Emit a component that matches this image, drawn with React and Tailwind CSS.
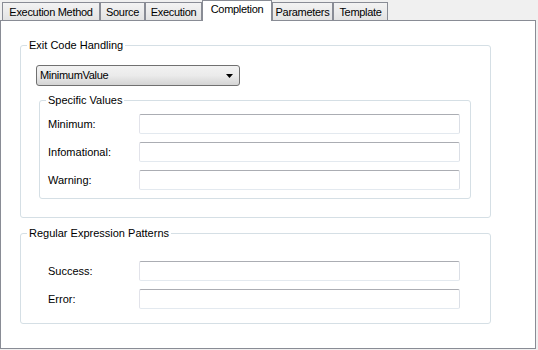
import React from 'react';

const tabs = [
  { name: 'Execution Method', w: 'w-[98px]' },
  { name: 'Source', w: 'w-[45px]' },
  { name: 'Execution', w: 'w-[57px]' },
  { name: 'Completion', w: 'w-[70px]', active: true },
  { name: 'Parameters', w: 'w-[61px]' },
  { name: 'Template', w: 'w-[55px]' },
];

const TextBox = () => (
  <div className="w-[321px] h-[20px] bg-white rounded-[2px] border border-t-[#abadb3] border-l-[#e2e3ea] border-r-[#dbdfe6] border-b-[#e3e9ef]" />
);

const Field = ({ label, labelClass }) => (
  <div className="flex items-center h-[20px]">
    <span className={labelClass}>{label}</span>
    <TextBox />
  </div>
);

const Group = ({ title, className, children }) => (
  <div className={`border border-[#d5dfe5] rounded-[3px] ${className}`}>
    <div className="-mt-[7px] ml-[6px] px-[2px] w-fit bg-white leading-[13px]">{title}</div>
    {children}
  </div>
);

const App = () => {
  return (
    <div
      className="w-[538px] h-[350px] bg-[#f0f0f0] text-[11px] text-black overflow-hidden"
      style={{ fontFamily: '"Liberation Sans", Arial, sans-serif' }}
    >
      <div className="flex items-end h-[21px] pl-[2px] relative z-10 tracking-[-0.3px]">
        {tabs.map((t) =>
          t.active ? (
            <div
              key={t.name}
              className={`${t.w} h-[21px] bg-white border border-b-0 border-[#898c95] flex justify-center pt-[2px] leading-[13px] whitespace-nowrap`}
            >
              {t.name}
            </div>
          ) : (
            <div
              key={t.name}
              className={`${t.w} h-[18px] mb-[1px] bg-gradient-to-b from-[#f3f3f3] to-[#e3e3e3] border border-b-0 border-[#898c95] flex justify-center pt-[3px] leading-[13px] whitespace-nowrap`}
            >
              {t.name}
            </div>
          )
        )}
      </div>
      <div className="-mt-[1px] w-[536px] h-[329px] bg-white border border-[#898c95] pl-[19px] pt-[24px]">
        <Group title="Exit Code Handling" className="w-[471px] h-[173px]">
          <div className="ml-[15px] mt-[13px] w-[204px] h-[21px] rounded-[3px] border border-[#707070] bg-gradient-to-b from-[#f2f2f2] via-[#ebebeb] to-[#d4d4d4] flex items-center justify-between pl-[3px] pr-[6px]">
            <span className="leading-[13px] tracking-[-0.3px]">MinimumValue</span>
            <svg width="7" height="4" viewBox="0 0 7 4">
              <path d="M0 0h7L3.5 4z" fill="#000" />
            </svg>
          </div>
          <Group title="Specific Values" className="ml-[18px] mt-[14px] w-[432px] h-[99px]">
            <div className="flex flex-col gap-[8px] mt-[7px]">
              <Field label="Minimum:" labelClass="w-[99px] pl-[8px]" />
              <Field label="Infomational:" labelClass="w-[99px] pl-[8px]" />
              <Field label="Warning:" labelClass="w-[99px] pl-[8px]" />
            </div>
          </Group>
        </Group>
        <Group title="Regular Expression Patterns" className="mt-[15px] w-[471px] h-[91px]">
          <div className="flex flex-col gap-[8px] mt-[21px]">
            <Field label="Success:" labelClass="w-[118px] pl-[27px]" />
            <Field label="Error:" labelClass="w-[118px] pl-[27px]" />
          </div>
        </Group>
      </div>
    </div>
  );
};

export default App;
